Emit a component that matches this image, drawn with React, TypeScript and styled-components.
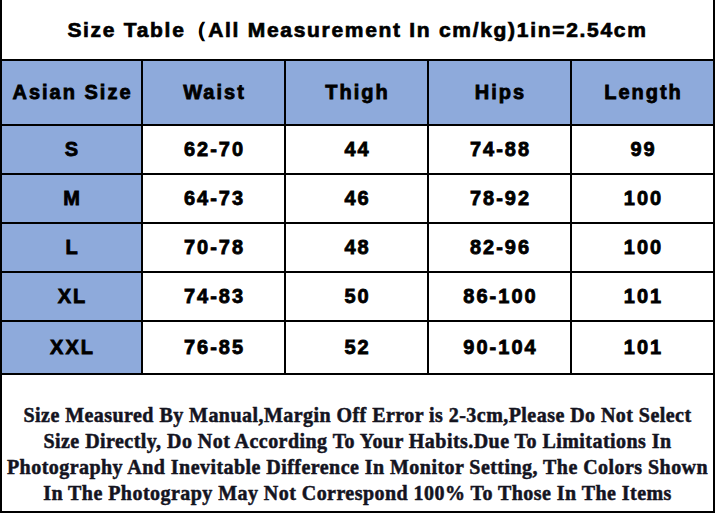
import React from 'react';
import styled, { createGlobalStyle } from 'styled-components';

const GlobalStyle = createGlobalStyle`
  html, body {
    margin: 0;
    padding: 0;
    background: #fff;
  }
`;

const Frame = styled.div`
  box-sizing: border-box;
  width: 715px;
  height: 513px;
  border-left: 2px solid #000;
  border-right: 2px solid #000;
  border-bottom: 2px solid #000;
  background: #fff;
  display: flex;
  flex-direction: column;
`;

const Title = styled.div`
  box-sizing: border-box;
  height: 61px;
  border-bottom: 2px solid #000;
  display: flex;
  align-items: center;
  justify-content: center;
  font-family: 'Liberation Sans', Arial, sans-serif;
  font-weight: 700;
  font-size: 21px;
  letter-spacing: 1.7px;
  -webkit-text-stroke: 0.7px #000;
  color: #000;
`;

const Grid = styled.div`
  display: grid;
  grid-template-columns: 141px 143px 143px 143px 1fr;
  grid-template-rows: 65px repeat(4, 49px) 53px;
`;

const Cell = styled.div<{ $shade?: boolean; $last?: boolean }>`
  box-sizing: border-box;
  display: flex;
  align-items: center;
  justify-content: center;
  border-bottom: 2px solid #000;
  border-right: ${({ $last }) => ($last ? 'none' : '2px solid #000')};
  background: ${({ $shade }) => ($shade ? '#8eaadb' : '#fff')};
  font-family: 'Liberation Sans', Arial, sans-serif;
  font-weight: 700;
  font-size: 20px;
  letter-spacing: 2px;
  -webkit-text-stroke: 0.8px #000;
  color: #000;
  padding-left: 2px;
`;

const Footer = styled.div`
  flex: 1;
  display: flex;
  flex-direction: column;
  align-items: center;
  padding-top: 27px;
  font-family: 'Liberation Serif', 'Times New Roman', serif;
  font-weight: 700;
  font-size: 20px;
  line-height: 26px;
  letter-spacing: 0.45px;
  color: #14141f;
  -webkit-text-stroke: 0.5px #14141f;
`;

const FooterLine = styled.div`
  white-space: nowrap;
`;

const headers = ['Asian Size', 'Waist', 'Thigh', 'Hips', 'Length'];

const rows = [
  ['S', '62-70', '44', '74-88', '99'],
  ['M', '64-73', '46', '78-92', '100'],
  ['L', '70-78', '48', '82-96', '100'],
  ['XL', '74-83', '50', '86-100', '101'],
  ['XXL', '76-85', '52', '90-104', '101'],
];

const notes = [
  'Size Measured By Manual,Margin Off Error is 2-3cm,Please Do Not Select',
  'Size Directly, Do Not According To Your Habits.Due To Limitations In',
  'Photography And Inevitable Difference In Monitor Setting, The Colors Shown',
  'In The Photograpy May Not Correspond 100% To Those In The Items',
];

export default function App() {
  return (
    <>
      <GlobalStyle />
      <Frame>
        <Title>Size Table（All Measurement In cm/kg)1in=2.54cm</Title>
        <Grid>
          {headers.map((h, i) => (
            <Cell key={h} $shade $last={i === headers.length - 1}>
              {h}
            </Cell>
          ))}
          {rows.map((row) =>
            row.map((v, i) => (
              <Cell key={row[0] + i} $shade={i === 0} $last={i === row.length - 1}>
                {v}
              </Cell>
            ))
          )}
        </Grid>
        <Footer>
          {notes.map((n) => (
            <FooterLine key={n}>{n}</FooterLine>
          ))}
        </Footer>
      </Frame>
    </>
  );
}
